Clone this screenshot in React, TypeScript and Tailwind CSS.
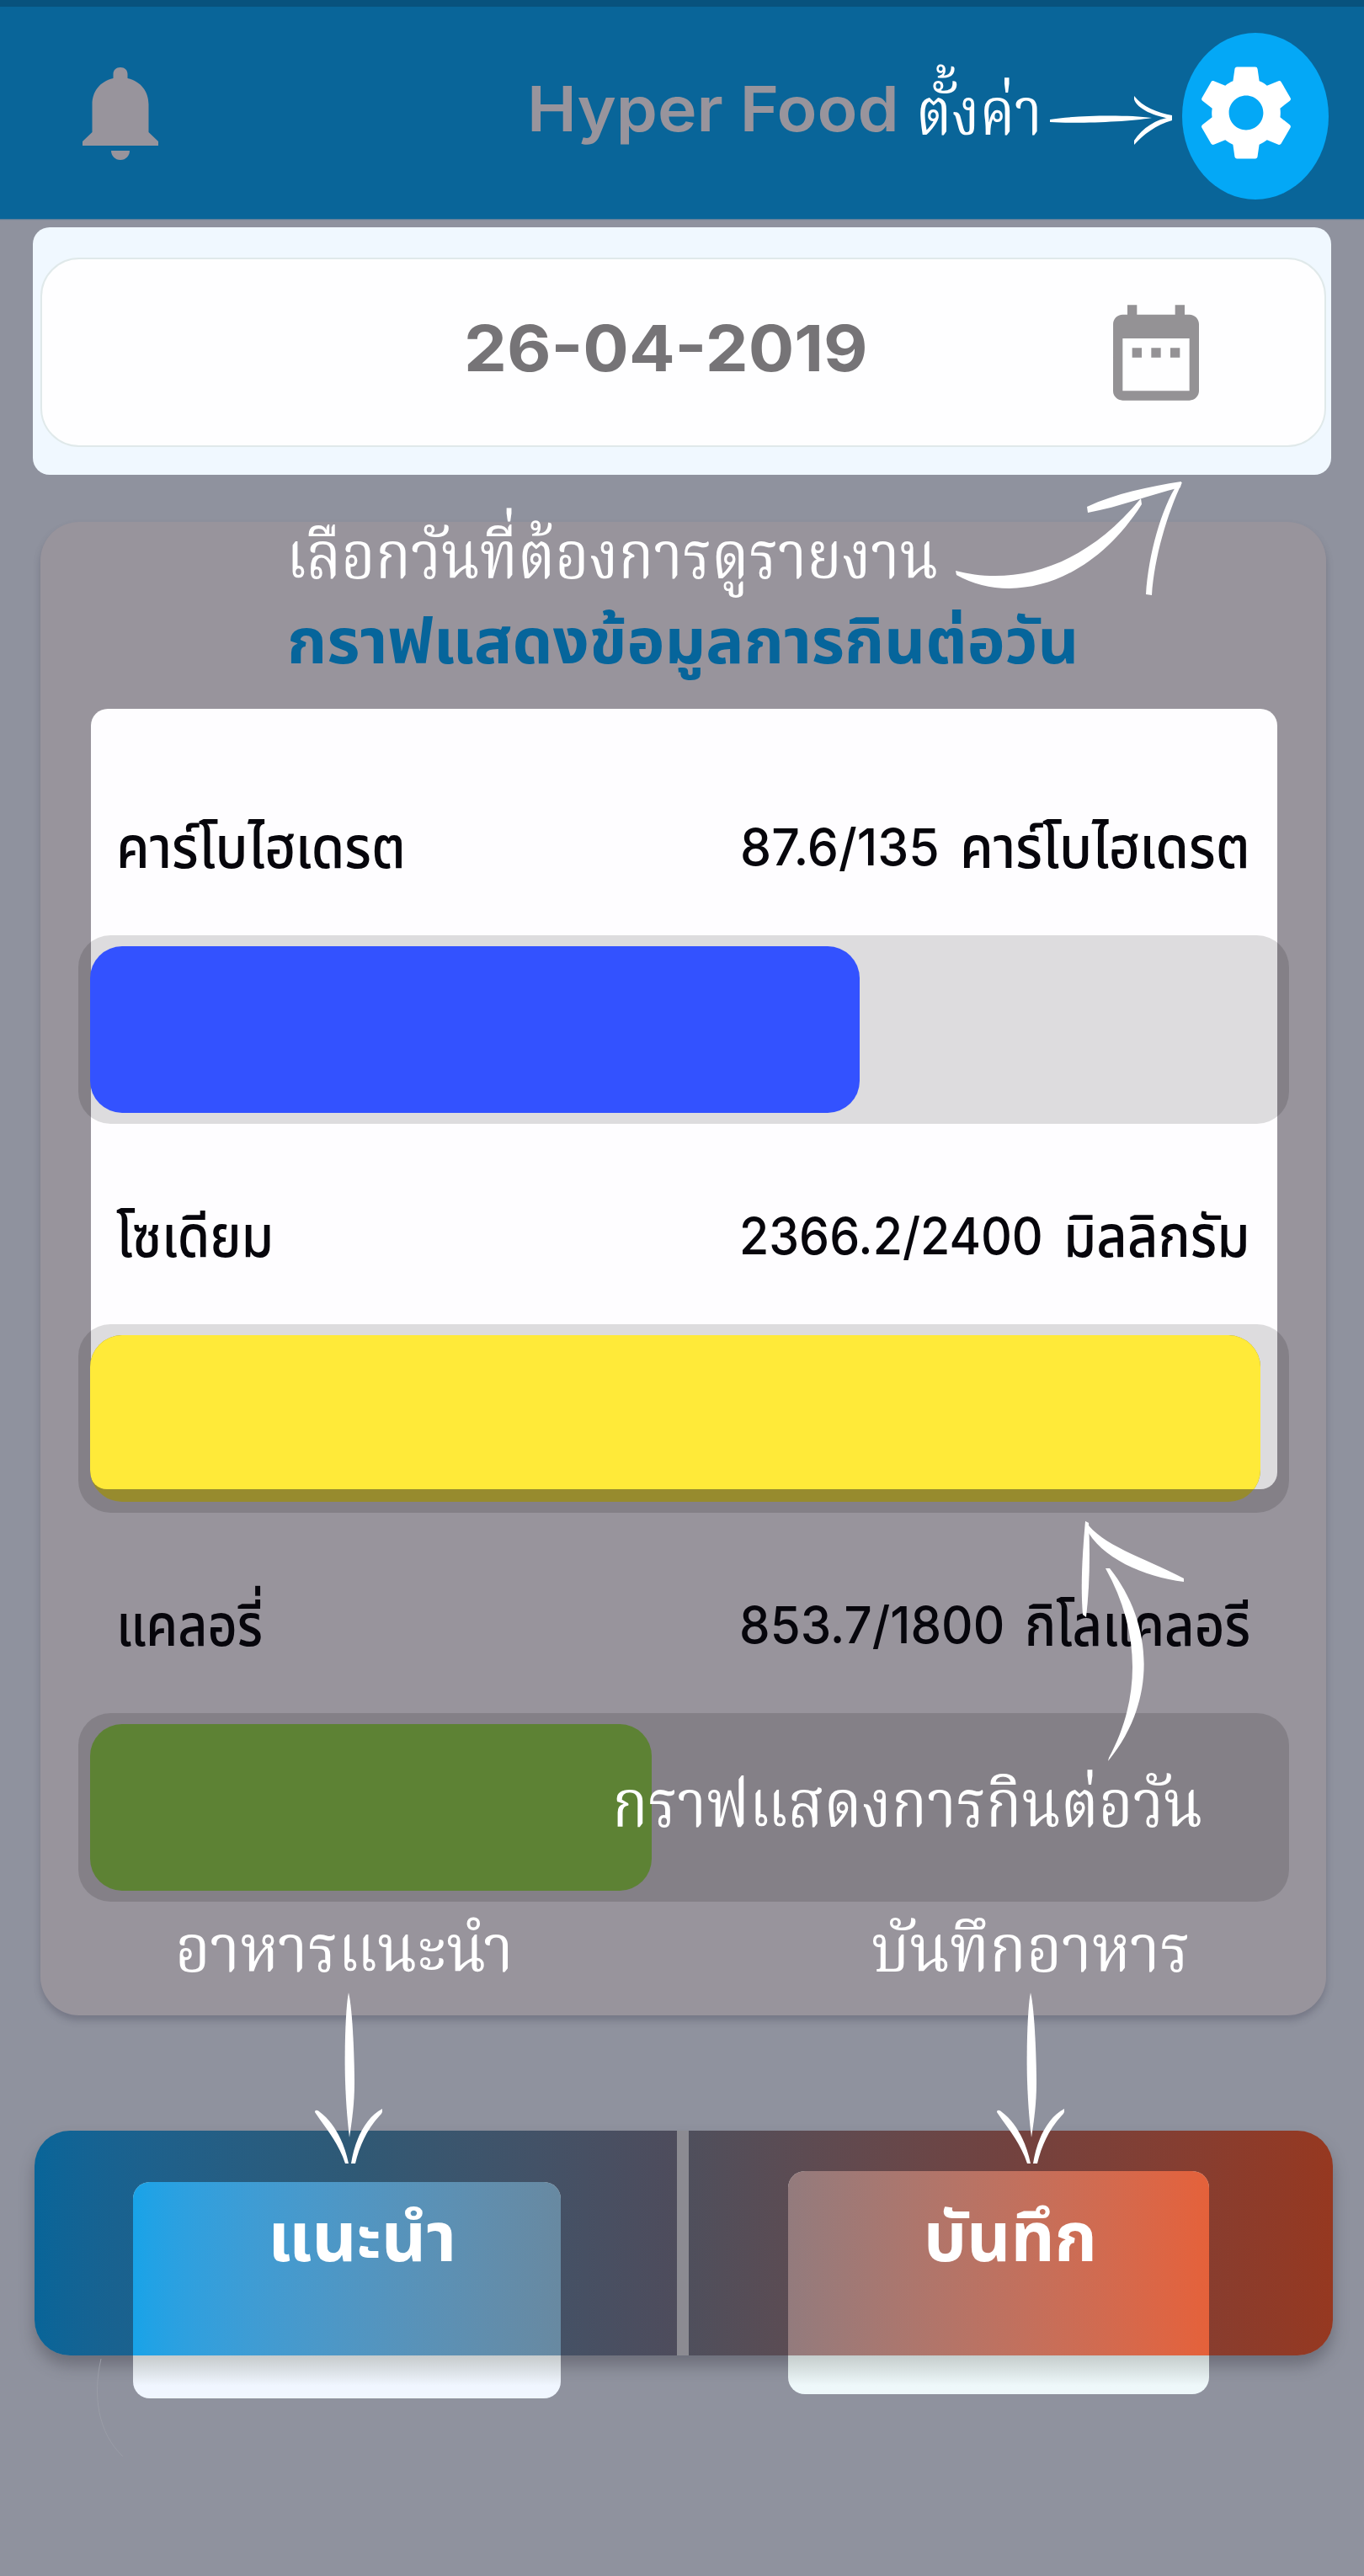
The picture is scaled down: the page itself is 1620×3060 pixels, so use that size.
import { useLayoutEffect, useRef, useState } from "react";
import type { ReactNode } from "react";
import { MdDateRange, MdSettings } from "react-icons/md";

/** One line of text, stretched horizontally to fill its box. */
function FitText({ className, children }: { className: string; children: ReactNode }) {
  const box = useRef<HTMLDivElement>(null);
  const text = useRef<HTMLSpanElement>(null);
  const [scale, setScale] = useState(1);
  useLayoutEffect(() => {
    if (box.current && text.current) setScale(box.current.offsetWidth / text.current.offsetWidth);
  }, []);
  return (
    <div ref={box} className={"shrink-0 whitespace-nowrap " + className}>
      <span ref={text} className="inline-block origin-left" style={{ transform: `scaleX(${scale})` }}>
        {children}
      </span>
    </div>
  );
}

function Note({ className, width, children }: { className: string; width: string; children: ReactNode }) {
  return (
    <div className={"absolute font-['Noto_Serif_Thai','Noto_Sans_Thai',serif] text-[79px] leading-[90px] text-white " + className}>
      <FitText className={width}>{children}</FitText>
    </div>
  );
}

function Bell() {
  return (
    <svg viewBox="0 0 90 110" className="h-[110px] w-[90px] fill-[#98949c]">
      <path d="M45 0c-5 0-8.500 3-8.500 8v5C20 17 11.500 29 11.500 44v33L0 88v5h90v-5L78.500 77V44C78.500 29 70 17 53.500 13V8c0-5-3.500-8-8.500-8z" />
      <path d="M34 99h22c0 6-4.500 11-11 11s-11-5-11-11z" />
    </svg>
  );
}

function DownArrow({ className }: { className: string }) {
  return (
    <svg viewBox="0 0 80 205" className={"absolute h-[205px] w-20 fill-white " + className}>
      <path d="M40 0C36 20 35 75 36 105s3 50 5 67c3-20 6-40 6-65S45 20 40 0z" />
      <path d="M0 142c0-3 3-3 6 0 16 12 28 33 34 61h-4C28 178 12 160 0 142zM80 138c1 2 0 5-3 8-14 15-24 35-29 57h-5c4-26 16-54 37-65z" />
    </svg>
  );
}

type RowProps = { name: string; nameWidth: string; amount: string; amountWidth: string; unit: string; unitWidth: string };

function LabelRow({ name, nameWidth, amount, amountWidth, unit, unitWidth }: RowProps) {
  return (
    <div className="mb-[65px] flex h-[80px] items-center justify-between pl-[45px] pr-[46px] text-[70px] font-medium leading-[80px] text-[#07060c]">
      <FitText className={nameWidth}>{name}</FitText>
      <div className="flex items-center gap-[24px]">
        <FitText className={"text-[61px] " + amountWidth}>{amount}</FitText>
        <FitText className={unitWidth}>{unit}</FitText>
      </div>
    </div>
  );
}

function Track({ children }: { children: ReactNode }) {
  return <div className="mb-[93px] h-[224px] rounded-[38px] bg-black/[0.13] px-[14px] py-[13px]">{children}</div>;
}

export default function App() {
  return (
    <div className="relative h-[3060px] w-[1620px] overflow-hidden bg-[#8f929e] font-['Inter','Noto_Sans_Thai',sans-serif]">
      <header className="flex h-[260px] justify-between border-t-8 border-[#08527d] bg-[#096599] shadow-[0_1px_1px_#5b7f9b]">
        <div className="ml-[98px] mt-[72px]">
          <Bell />
        </div>
        <div className="flex">
          <FitText className="mt-[76px] h-[90px] w-[442px] text-[74px] font-semibold leading-[90px] text-[#98949c]">Hyper Food</FitText>
          <div className="ml-[336px] mr-[42px] mt-[31px] flex h-[198px] w-[174px] items-center rounded-[50%] bg-[#04a8f6] pl-[8px]">
            <MdSettings className="mb-[8px] size-[136px] shrink-0 text-white" />
          </div>
        </div>
      </header>

      <section className="ml-[39px] mt-[10px] h-[294px] w-[1542px] rounded-[20px] bg-[#f0f8ff] pl-[9px] pt-[36px]">
        <div className="flex h-[225px] w-[1527px] items-center justify-end rounded-[46px] border-2 border-[#e0e9ea] bg-[#fefeff]">
          <FitText className="mb-[10px] h-[90px] w-[480px] text-[75px] font-bold leading-[90px] text-[#767477]">26-04-2019</FitText>
          <MdDateRange className="ml-[274px] mr-[132px] size-[136px] text-[#949295]" />
        </div>
      </section>

      <main className="relative ml-[48px] mt-[56px] h-[1774px] w-[1527px] rounded-[46px] bg-[#98949c] shadow-[0_6px_9px_rgba(60,60,80,0.3)]">
        <div className="flex h-[221px] justify-center pt-[96px]">
          <FitText className="mr-[1px] h-[90px] w-[940px] text-[74px] font-bold leading-[90px] text-[#06659b]">กราฟแสดงข้อมูลการกินต่อวัน</FitText>
        </div>
        <div className="absolute left-[60px] top-[222px] h-[927px] w-[1409px] rounded-[20px] bg-[#fefdff]" />
        <div className="relative mx-[45px] w-[1438px] pt-[125px]">
          <LabelRow name="คาร์โบไฮเดรต" nameWidth="w-[344px]" amount="87.6/135" amountWidth="w-[237px]" unit="คาร์โบไฮเดรต" unitWidth="w-[345px]" />
          <Track>
            <div className="h-[198px] w-[914px] rounded-[38px] bg-[#3352ff]" />
          </Track>
          <LabelRow name="โซเดียม" nameWidth="w-[187px]" amount="2366.2/2400" amountWidth="w-[361px]" unit="มิลลิกรัม" unitWidth="w-[222px]" />
          <Track>
            <div className="h-[198px] w-[1390px] overflow-hidden rounded-[38px] bg-[#978b2e]">
              <div className="h-[183px] rounded-bl-[20px] bg-[#ffea39]" />
            </div>
          </Track>
          <LabelRow name="แคลอรี่" nameWidth="w-[174px]" amount="853.7/1800" amountWidth="w-[315px]" unit="กิโลแคลอรี" unitWidth="w-[268px]" />
          <Track>
            <div className="h-[198px] w-[667px] rounded-[38px] bg-[#5d8234]" />
          </Track>
        </div>
      </main>

      <nav className="ml-[41px] mt-[137px] flex h-[267px] w-[1542px] rounded-[42px] bg-[#8c8b92] shadow-[0_12px_18px_rgba(60,60,70,0.4)]">
        <div className="h-full w-[763px] rounded-l-[42px] bg-linear-to-r from-[#086599] via-[#2f5975] to-[#4e4c5c]" />
        <div className="ml-[14px] h-full flex-1 rounded-r-[42px] bg-linear-to-r from-[#4f4f5c] via-[#72423f] to-[#963820]" />
      </nav>

      {/* highlighted areas over the two buttons */}
      <div className="absolute left-[158px] top-[2592px] h-[257px] w-[508px] overflow-hidden rounded-[20px] bg-linear-to-b from-[#c5cacb] from-80% to-[#f0f6ff] to-94%">
        <div className="h-[206px] bg-linear-to-r from-[#18a3e8] to-[#6889a1] pl-[160px] pt-[20px]">
          <FitText className="w-[224px] text-[82px] font-bold leading-[90px] text-white">แนะนำ</FitText>
        </div>
      </div>
      <div className="absolute left-[936px] top-[2579px] h-[265px] w-[500px] overflow-hidden rounded-[20px] bg-linear-to-b from-[#c3cbca] from-82% to-[#eef8fa] to-96%">
        <div className="h-[219px] bg-linear-to-r from-[#937b7d] to-[#e5613a] pl-[161px] pt-[33px]">
          <FitText className="w-[206px] text-[82px] font-bold leading-[90px] text-white">บันทึก</FitText>
        </div>
      </div>
      <svg viewBox="0 0 40 120" className="absolute left-[112px] top-[2800px] h-[120px] w-[40px] fill-none stroke-[#9a9da7]">
        <path d="M8 2C-2 45 4 90 34 118" />
      </svg>

      {/* handwritten annotations */}
      <Note className="left-[1088px] top-[94px]" width="w-[150px]">ตั้งค่า</Note>
      <svg viewBox="0 0 146 60" className="absolute left-[1247px] top-[113px] h-[60px] w-[146px] fill-white">
        <path d="M0 29c30-5 90-6 121-2-30 5-90 7-121 5z" />
        <path d="M100 1c10 13 28 20 45 23v4C125 26 103 16 100 5zM145 30c-19 5-34 17-45 29v-5c10-15 26-26 45-28z" />
      </svg>

      <Note className="left-[340px] top-[621px]" width="w-[774px]">เลือกวันที่ต้องการดูรายงาน</Note>
      <svg viewBox="0 0 270 140" className="absolute left-[1135px] top-[570px] h-[140px] w-[270px] fill-white">
        <path d="M0 108c60 16 145 5 220-86l1 7C160 125 66 149 1 113z" />
        <path d="M156 32C190 16 230 8 268 2l-1 7C230 18 195 32 157 39z" />
        <path d="M264 4c-20 30-35 85-38 132l7 1c3-45 18-96 36-134z" />
      </svg>

      <svg viewBox="0 0 124 290" className="absolute left-[1284px] top-[1806px] h-[290px] w-[124px] fill-white">
        <path d="M5 1C2 35 -1 75 2 112l4 3c4-35 5-75 3-112z" />
        <path d="M5 1c20 29 67 42 117 68v4C75 67 23 45 5 8z" />
        <path d="M29 57c42 75 42 155 4 225l-1 4c60-73 53-165 2-229z" />
      </svg>
      <Note className="left-[727px] top-[2104px]" width="w-[701px]">กราฟแสดงการกินต่อวัน</Note>
      <Note className="left-[208px] top-[2276px]" width="w-[402px]">อาหารแนะนำ</Note>
      <Note className="left-[1035px] top-[2276px]" width="w-[379px]">บันทึกอาหาร</Note>
      <DownArrow className="left-[374px] top-[2367px]" />
      <DownArrow className="left-[1184px] top-[2367px]" />
    </div>
  );
}
